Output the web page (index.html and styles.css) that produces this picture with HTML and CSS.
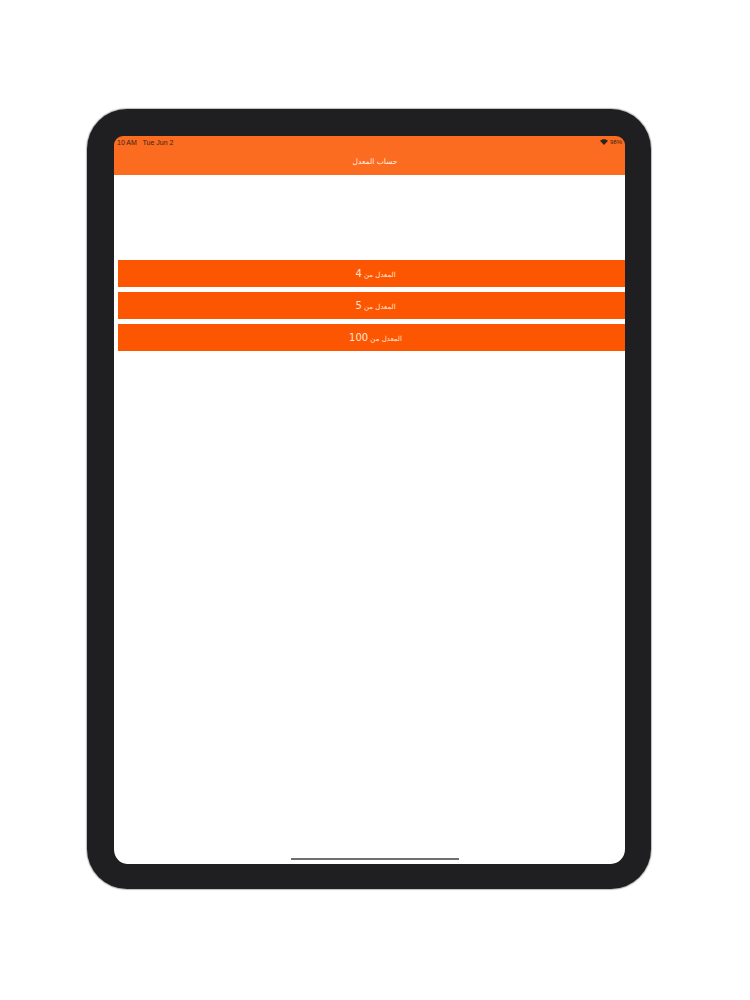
FILE: index.html
```html
<!DOCTYPE html>
<html lang="ar">
<head>
    <meta charset="UTF-8">
    <meta name="viewport" content="width=device-width, initial-scale=1.0">
    <title>حساب المعدل</title>
    <link rel="stylesheet" href="styles.css">
</head>
<body>
    <div class="device">
        <div class="screen">
            <div class="header">
                <div class="status" dir="ltr">
                    <span class="status-time">10 AM&nbsp;&nbsp; Tue Jun 2</span>
                    <span class="status-right">
                        <svg class="wifi" viewBox="0 0 16 12" width="8" height="6">
                            <path d="M8 12 L0 3.6 C4.4 -0.8 11.6 -0.8 16 3.6 Z" fill="#2a2320"/>
                        </svg>
                        <span>98%</span>
                    </span>
                </div>
                <div class="title">حساب المعدل</div>
            </div>
            <div class="menu">
                <button class="menu-btn">المعدل من <span class="num">4</span></button>
                <button class="menu-btn">المعدل من <span class="num">5</span></button>
                <button class="menu-btn">المعدل من <span class="num">100</span></button>
            </div>
            <div class="home-bar"></div>
        </div>
    </div>
</body>
</html>
```

FILE: styles.css
```css
body {
    margin: 0;
    height: 1000px;
    background-color: #fff;
    font-family: "DejaVu Sans", "Noto Sans", sans-serif;
    overflow: hidden;
}

.device {
    box-sizing: border-box;
    width: 564px;
    height: 780px;
    margin: 109px 0 0 87px;
    border-style: solid;
    border-color: #1f1e20;
    border-width: 27px 26px 25px 27px;
    border-radius: 40px;
    background-color: #fff;
    box-shadow: 0 0 1px 1px rgba(60, 60, 60, 0.35);
}

.screen {
    display: flex;
    flex-direction: column;
    height: 100%;
    border-radius: 9px;
    overflow: hidden;
}

.header {
    height: 39px;
    background-color: #fb6b20;
    flex-shrink: 0;
}

.status {
    display: flex;
    justify-content: space-between;
    align-items: center;
    height: 12px;
    font-family: "Liberation Sans", Arial, sans-serif;
    font-size: 7px;
    color: #3a2418;
}

.status-time {
    margin-left: 3px;
}

.status-right {
    display: flex;
    align-items: center;
    gap: 2px;
    margin-right: 3px;
    font-size: 6px;
}

.title {
    margin-top: 4px;
    padding-left: 11px;
    text-align: center;
    font-size: 7.5px;
    line-height: 20px;
    color: #fff3e6;
}

.menu {
    display: flex;
    flex-direction: column;
    gap: 5px;
    margin: 85px 0 0 4px;
}

.menu-btn {
    height: 27px;
    padding: 0 0 0 8px;
    border: none;
    background-color: #fd5602;
    color: #ffe6d2;
    font-family: inherit;
    font-size: 7px;
    text-align: center;
    direction: rtl;
}

.num {
    font-size: 10px;
}

.home-bar {
    width: 168px;
    height: 2.5px;
    margin: auto 0 4px 177px;
    background-color: #6f6f72;
}
```
